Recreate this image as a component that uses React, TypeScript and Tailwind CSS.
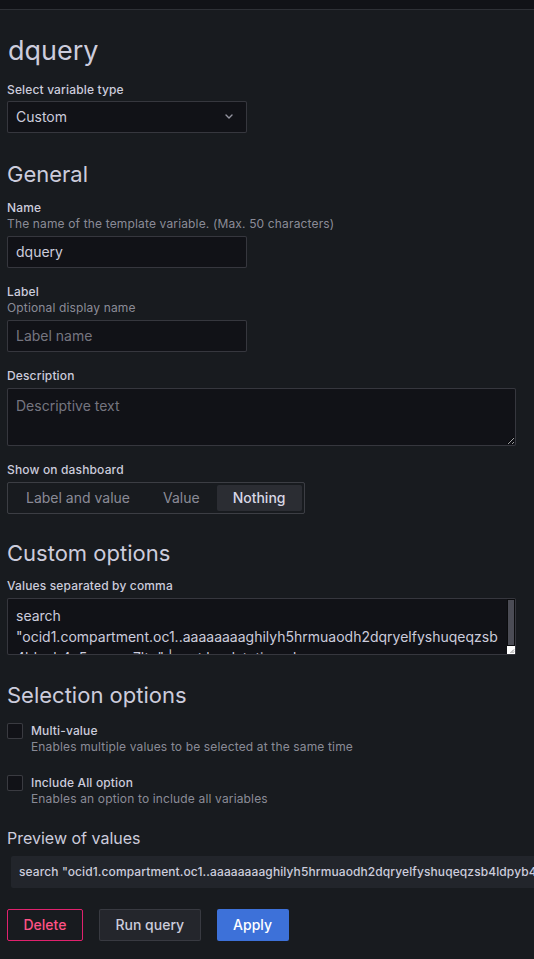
import React from "react";

const VALUE =
  'search "ocid1.compartment.oc1..aaaaaaaaghilyh5hrmuaodh2dqryelfyshuqeqzsb4ldpyb4a5nqvsrq7ltq" | sort by datetime desc';

function FieldLabel({ children, className = "" }: { children: React.ReactNode; className?: string }) {
  return (
    <div className={"text-[12px] leading-[15px] font-medium tracking-[0.15px] text-[#ccccdc] " + className}>{children}</div>
  );
}

function Desc({ children, className = "" }: { children: React.ReactNode; className?: string }) {
  return (
    <div className={"text-[12px] leading-[18px] tracking-[0.15px] text-[rgba(204,204,220,0.65)] " + className}>{children}</div>
  );
}

function Checkbox() {
  return <div className="w-[16px] h-[16px] shrink-0 rounded-[2px] border border-[rgba(204,204,220,0.22)] bg-[#111217]" />;
}

export default function App() {
  return (
    <div className="min-h-screen w-full overflow-hidden bg-[#181b1f] font-[Inter,sans-serif] text-[#ccccdc]">
      <div className="h-[10px] bg-[#111217] border-b border-[#2e3036]" />
      <div className="pl-[7px] pt-[24px]">
        <h1 className="text-[27px] leading-[33.6px] font-normal pl-px">dquery</h1>

        <FieldLabel className="mt-[14px] mb-[4px]">Select variable type</FieldLabel>
        <div className="w-[240px] h-[32px] flex items-center justify-between pl-[8px] pr-[13px] bg-[#111217] border border-[rgba(204,204,220,0.2)] rounded-[2px] text-[14px]">
          <span>Custom</span>
          <svg width="8" height="5" viewBox="0 0 8 5" fill="none">
            <path d="M1 1l3 3 3-3" stroke="rgba(204,204,220,0.7)" strokeWidth="1.4" strokeLinecap="round" strokeLinejoin="round" />
          </svg>
        </div>

        <h3 className="mt-[28px] text-[22px] leading-[1.2] font-normal">General</h3>

        <div className="mt-[13px]">
          <FieldLabel>Name</FieldLabel>
          <Desc className="mb-[3px]">The name of the template variable. (Max. 50 characters)</Desc>
          <div className="w-[240px] h-[32px] flex items-center px-[8px] bg-[#111217] border border-[rgba(204,204,220,0.2)] rounded-[2px] text-[14px]">
            dquery
          </div>
        </div>

        <div className="mt-[16px]">
          <FieldLabel>Label</FieldLabel>
          <Desc className="mb-[3px]">Optional display name</Desc>
          <div className="w-[240px] h-[32px] flex items-center px-[8px] bg-[#111217] border border-[rgba(204,204,220,0.2)] rounded-[2px] text-[14px] text-[rgba(204,204,220,0.55)]">
            Label name
          </div>
        </div>

        <div className="mt-[16px]">
          <FieldLabel className="mb-[5px]">Description</FieldLabel>
          <textarea
            placeholder="Descriptive text"
            className="block w-[509px] h-[58px] px-[8px] py-[6px] bg-[#111217] border border-[rgba(204,204,220,0.2)] rounded-[2px] text-[14px] leading-[21px] text-[#ccccdc] placeholder:text-[rgba(204,204,220,0.55)] outline-none"
          />
        </div>

        <div className="mt-[16px]">
          <FieldLabel className="mb-[5px]">Show on dashboard</FieldLabel>
          <div className="inline-flex h-[32px] items-center gap-[1px] p-[2px] border border-[rgba(204,204,220,0.2)] rounded-[2px] text-[14px]">
            <div className="h-[26px] px-[16px] flex items-center text-[rgba(204,204,220,0.65)]">Label and value</div>
            <div className="h-[26px] px-[16px] flex items-center text-[rgba(204,204,220,0.65)]">Value</div>
            <div className="h-[26px] px-[16px] flex items-center bg-[#2b2d33] rounded-[2px] font-medium text-[#d8d8e6]">Nothing</div>
          </div>
        </div>

        <h3 className="mt-[26px] text-[22px] leading-[1.2] font-normal">Custom options</h3>

        <FieldLabel className="mt-[12px] mb-[5px]">Values separated by comma</FieldLabel>
        <div className="relative w-[509px] h-[57px]">
          <textarea
            defaultValue={VALUE}
            className="block w-full h-full pl-[8px] pr-[16px] py-[6px] bg-[#111217] border border-[rgba(204,204,220,0.2)] rounded-[2px] text-[14px] leading-[21px] text-[#ccccdc] outline-none resize-none overflow-hidden"
          />
          <div className="absolute right-[1px] top-[1px] w-[8px] h-[47px] bg-[#4b4c55] border border-[#0b0c0e]" />
          <div className="absolute right-[1px] bottom-[1px] w-[8px] h-[8px] bg-white">
            <svg width="8" height="8" viewBox="0 0 8 8" className="block">
              <path d="M7 3.5L3.5 7M7 5.5L5.5 7" stroke="#7a7a7a" strokeWidth="0.9" />
            </svg>
          </div>
        </div>

        <h3 className="mt-[27px] text-[22px] leading-[1.2] font-normal">Selection options</h3>

        <div className="mt-[14px] flex gap-[8px]">
          <Checkbox />
          <div>
            <div className="text-[12px] leading-[15px] font-medium tracking-[0.15px]">Multi-value</div>
            <Desc>Enables multiple values to be selected at the same time</Desc>
          </div>
        </div>

        <div className="mt-[19px] flex gap-[8px]">
          <Checkbox />
          <div>
            <div className="text-[12px] leading-[15px] font-medium tracking-[0.15px]">Include All option</div>
            <Desc>Enables an option to include all variables</Desc>
          </div>
        </div>

        <h5 className="mt-[20px] text-[16px] leading-[20px] font-normal">Preview of values</h5>

        <div className="mt-[8px] ml-[4px] w-max h-[32px] flex items-center px-[8px] bg-[#22252b] rounded-[2px] text-[12px] font-medium tracking-[0.1px] whitespace-nowrap">
          {VALUE}
        </div>

        <div className="mt-[21px] flex gap-[16px] pb-[20px]">
          <button className="h-[32px] px-[15.5px] border border-[#e0226e] rounded-[2px] text-[14px] font-medium text-[#ff5286] bg-transparent">
            Delete
          </button>
          <button className="h-[32px] px-[15.5px] border border-[rgba(204,204,220,0.12)] rounded-[2px] text-[14px] font-medium text-[#ccccdc] bg-[#24262c]">
            Run query
          </button>
          <button className="h-[32px] px-[16.5px] rounded-[2px] text-[14px] font-medium text-white bg-[#3d71d9]">
            Apply
          </button>
        </div>
      </div>
    </div>
  );
}
